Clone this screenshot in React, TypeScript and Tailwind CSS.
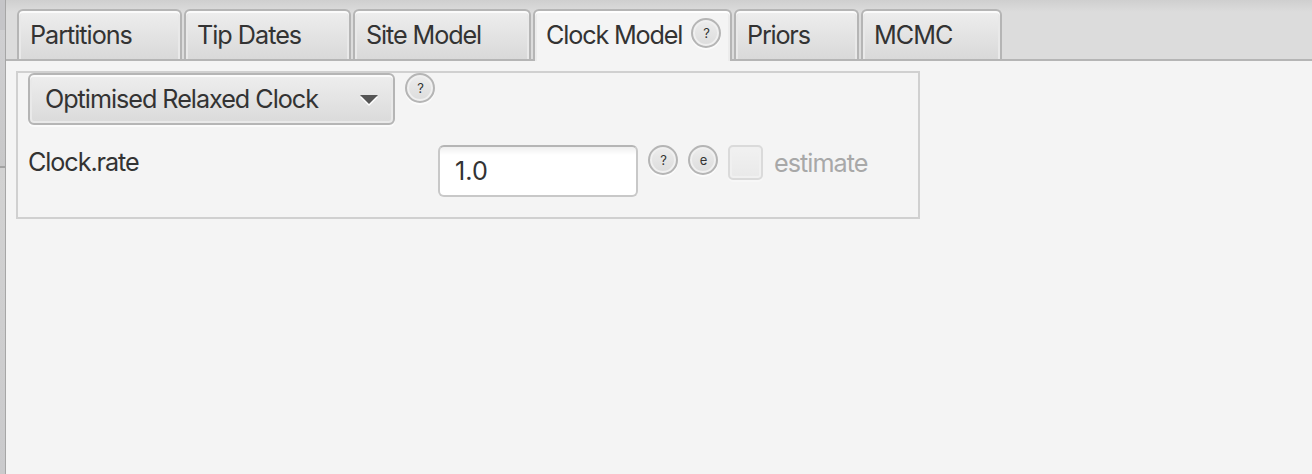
import type { ReactNode } from "react";

function RoundButton({ label, className = "" }: { label: string; className?: string }) {
  return (
    <button
      className={`flex h-[30px] w-[30px] shrink-0 items-center justify-center rounded-full border-2 border-[#b5b5b5] bg-linear-to-b from-[#ededed] to-[#dcdcdc] pt-px pl-px font-['Inter'] text-[13px] leading-none text-[#333] shadow-[0_2px_0_#fbfbfb,inset_0_0_0_2px_#f0f0f0] ${className}`}
    >
      {label}
    </button>
  );
}

function Tab({ children, className = "", selected = false }: { children: ReactNode; className?: string; selected?: boolean }) {
  const look = selected
    ? "h-[52px] bg-[#f4f4f4] shadow-[inset_0_2px_0_#fff,inset_2px_0_0_#ececec,inset_-2px_0_0_#ececec]"
    : "h-[50px] bg-linear-to-b from-[#eeeeee] to-[#d9d9d9] shadow-[inset_0_2px_0_#fbfbfb,inset_2px_0_0_#e9e9e9,inset_-2px_0_0_#e9e9e9]";
  return (
    <div className={`flex shrink-0 items-start rounded-t-[6px] border-2 border-b-0 border-[#b5b5b5] pl-[11px] ${look} ${className}`}>
      {children}
    </div>
  );
}

export default function App() {
  return (
    <div className="flex h-[474px] w-[1312px] overflow-hidden bg-[#f4f4f4] font-['Inter','Liberation_Sans',sans-serif] text-[25.2px] leading-[32px] whitespace-nowrap text-[#333]">
      <div className="flex w-[6px] shrink-0 flex-col border-r border-[#a6a6a6] bg-[#cfcfcf]">
        <div className="h-[30px] bg-[#c5c5c8]" />
        <div className="h-[136px] bg-linear-to-b from-[#cfcfd1] to-[#c8c8c9]" />
        <div className="h-[2px] bg-[#a3a3a3]" />
        <div className="flex-1 bg-linear-to-b from-[#d2d2d2] to-[#cacacc]" />
      </div>
      <div className="flex min-w-0 flex-1 flex-col">
        <div className="h-[61px] bg-[linear-gradient(to_bottom,#cfcfcf_0px,#dcdcdc_12px,#dcdcdc_100%)]">
          <div className="flex h-[61px] items-start gap-[2px] bg-[linear-gradient(#b5b5b5,#b5b5b5)] bg-[length:100%_2px] bg-bottom bg-no-repeat pt-[9px] pl-[11px]">
            <Tab className="w-[165px]"><span className="pt-[8px] tracking-[-1.02px]">Partitions</span></Tab>
            <Tab className="w-[167px]"><span className="pt-[8px] tracking-[-1px]">Tip Dates</span></Tab>
            <Tab className="w-[178px]"><span className="pt-[8px] tracking-[-1.1px]">Site Model</span></Tab>
            <Tab selected className="w-[199px]">
              <span className="w-[145px] pt-[8px] tracking-[-1.15px]">Clock Model</span>
              <RoundButton label="?" className="mt-[7px]" />
            </Tab>
            <Tab className="w-[125px]"><span className="pt-[8px] tracking-[-1.2px]">Priors</span></Tab>
            <Tab className="w-[141px]"><span className="pt-[8px] tracking-[-1px]">MCMC</span></Tab>
          </div>
        </div>
        <div className="mt-[10px] ml-[10px] flex h-[148px] w-[904px] flex-col border-2 border-[#d0d0d0] pl-[10px]">
          <div className="flex h-[72px] items-start gap-[10px]">
            <button className="flex h-[52px] w-[367px] items-start justify-between rounded-[6px] border-2 border-[#b5b5b5] bg-linear-to-b from-[#eeeeee] to-[#dadada] pr-[15px] pl-[15px] shadow-[0_2px_0_#fbfbfb,inset_0_2px_0_#fbfbfb,inset_0_0_0_2px_#e9e9e9]">
              <span className="pt-[8px] tracking-[-1.03px]">Optimised Relaxed Clock</span>
              <svg className="mt-[20px] h-[11px] w-[18px] shrink-0" viewBox="0 0 18 11">
                <path d="M0 2h18l-9 9z" fill="#fff" />
                <path d="M0 0h18l-9 9z" fill="#555" />
              </svg>
            </button>
            <RoundButton label="?" />
          </div>
          <div className="flex items-start">
            <label className="w-[410px] pt-[1px] tracking-[-1.08px]">Clock.rate</label>
            <div className="h-[52px] w-[200px] rounded-[6px] border-2 border-[#c8c8c8] border-t-[#b5b5b5] bg-[linear-gradient(to_bottom,#efefef_0px,#ffffff_8px)] pt-[8px] pl-[15px] tracking-[0.1px]">1.0</div>
            <RoundButton label="?" className="ml-[10px]" />
            <RoundButton label="e" className="ml-[10px]" />
            <div className="ml-[10px] h-[35px] w-[35px] rounded-[5px] border-2 border-[#dadada] bg-linear-to-b from-[#f1f1f1] to-[#e9e9e9] shadow-[0_2px_0_#f7f7f7,inset_0_0_0_2px_#f0f0f0]" />
            <span className="ml-[11px] pt-[2px] tracking-[-0.98px] text-[#a8a8a8]">estimate</span>
          </div>
        </div>
      </div>
    </div>
  );
}
